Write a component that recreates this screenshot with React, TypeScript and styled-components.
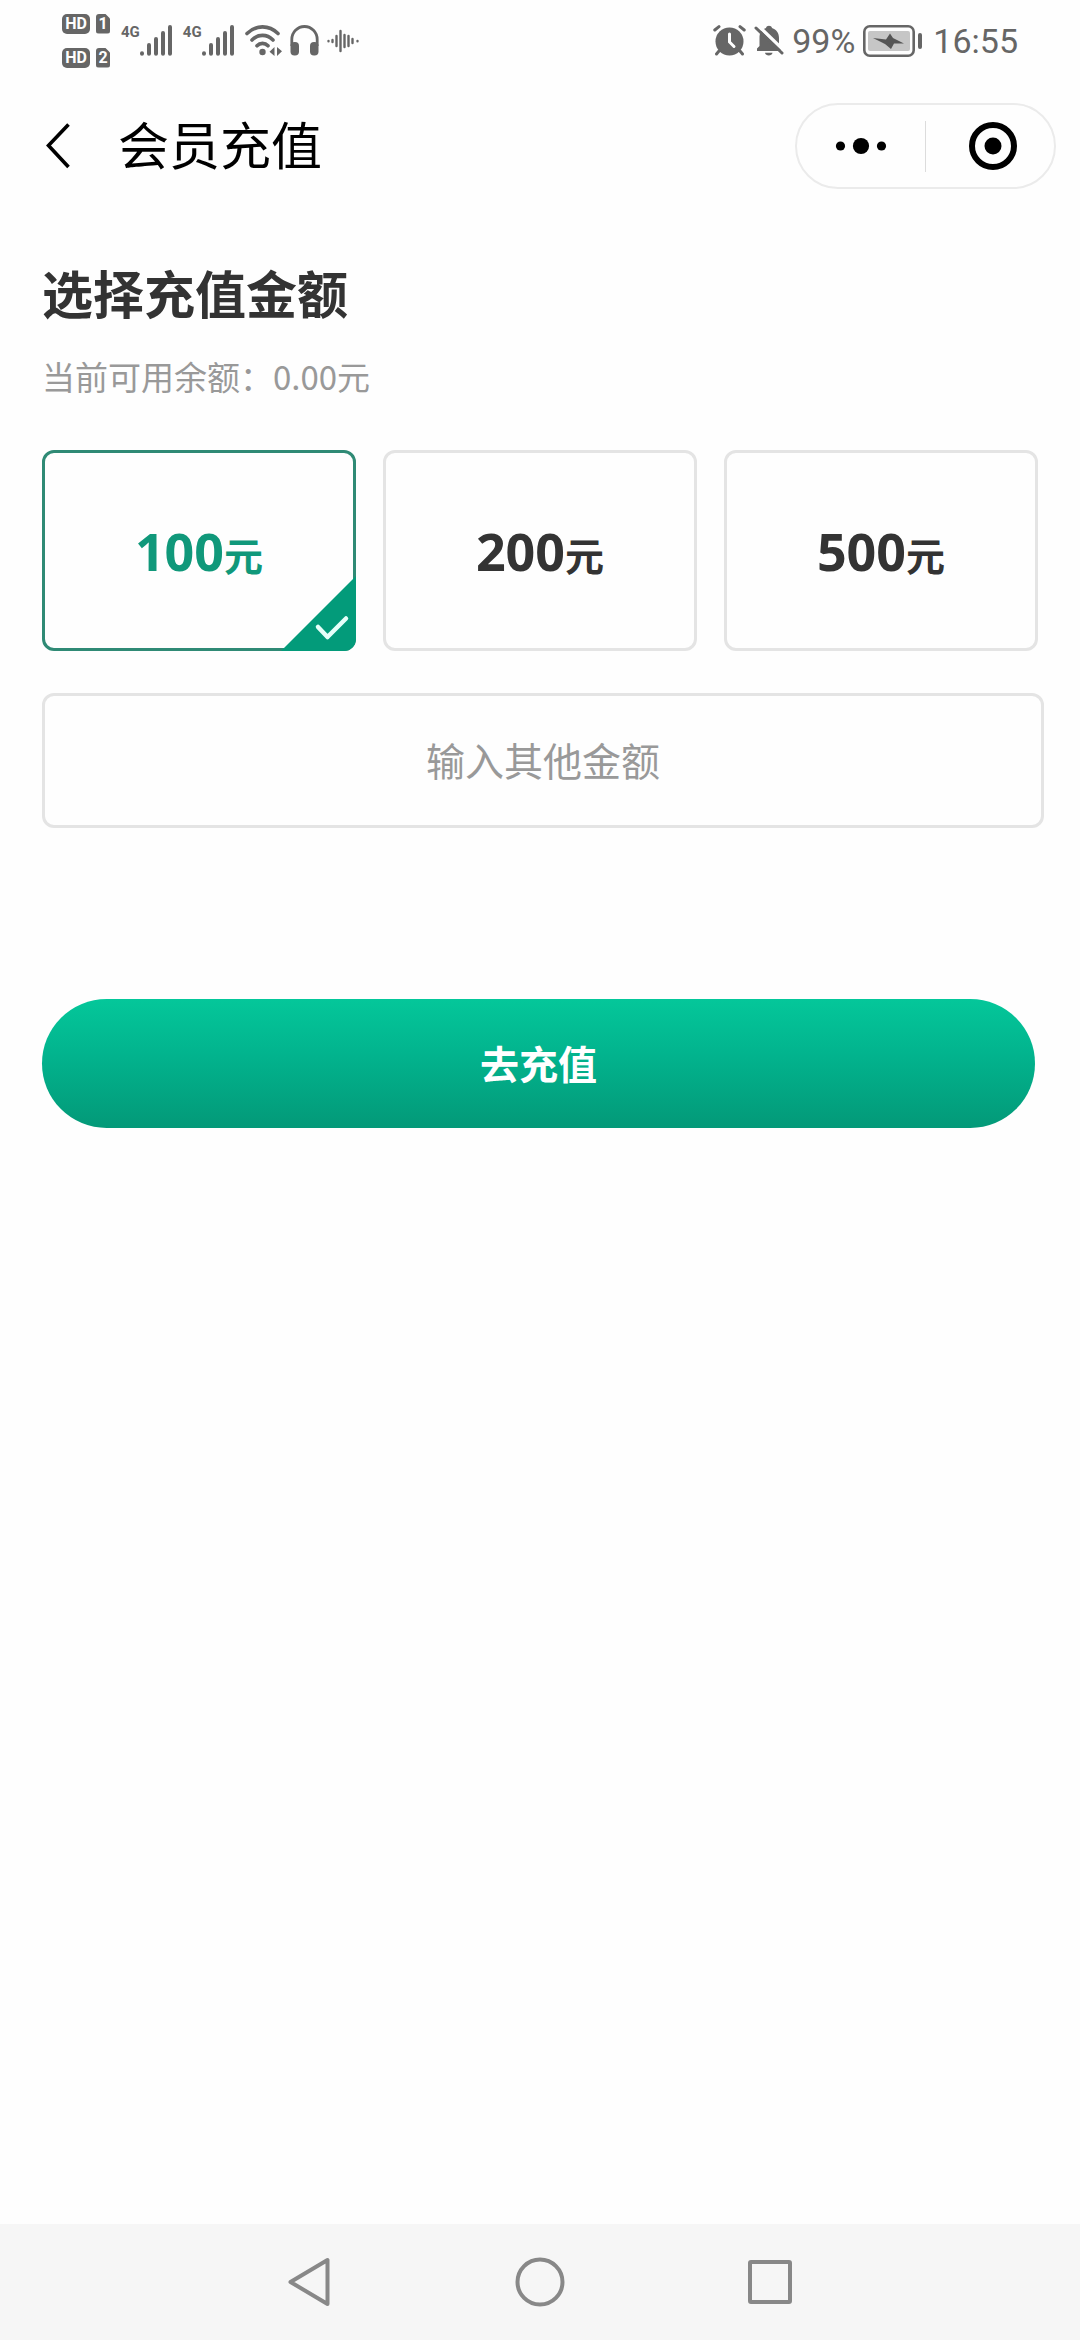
import React, { useState } from "react";
import styled, { createGlobalStyle } from "styled-components";

const GlobalStyle = createGlobalStyle`
  *, *::before, *::after { box-sizing: border-box; }
  body {
    margin: 0;
    background: #fefefe;
    color: #333;
    font-family: "Noto Sans CJK SC", "Noto Sans", sans-serif;
  }
  button, input { font-family: inherit; }
`;

const Screen = styled.div`
  min-height: 100vh;
  display: flex;
  flex-direction: column;
`;

/* ---------- status bar ---------- */

const StatusBar = styled.div`
  height: 81px;
  padding: 0 62px;
  display: flex;
  align-items: center;
  justify-content: space-between;
  color: #666;
  font-family: Roboto, sans-serif;
`;

const StatusGroup = styled.div<{ $gap: number }>`
  display: flex;
  align-items: center;
  gap: ${(p) => p.$gap}px;
`;

const SimStack = styled.div`
  display: grid;
  gap: 14px;
`;

const SimRow = styled.div`
  display: flex;
  gap: 6px;
`;

const Badge = styled.span<{ $sim?: boolean }>`
  width: ${(p) => (p.$sim ? 14 : 28)}px;
  height: 20px;
  border-radius: ${(p) => (p.$sim ? 3 : 5)}px;
  background: #666;
  color: #fefefe;
  font-size: 16px;
  font-weight: 700;
  line-height: 20px;
  text-align: center;
  clip-path: ${(p) => (p.$sim ? "polygon(0 0, 9px 0, 100% 5px, 100% 100%, 0 100%)" : "none")};
`;

const Signal = styled.div`
  display: flex;
  align-items: flex-start;
`;

const NetworkType = styled.span`
  font-size: 15px;
  font-weight: 700;
  line-height: 15px;
`;

const StatusText = styled.span`
  font-size: 34px;
  line-height: 40px;
`;

const SignalBars = () => (
  <svg width="32" height="31" viewBox="0 0 32 31" stroke="#666" strokeWidth="4" strokeLinecap="round">
    <path d="M2 28.2V28.8M9 20V28.8M16 14V28.8M23 8V28.8M30 2V28.8" />
  </svg>
);

const WifiIcon = () => (
  <svg width="37" height="31" viewBox="0 0 37 31" fill="none" stroke="#666" strokeWidth="3.6" strokeLinecap="round">
    <path d="M2 8.5C11-.3 24-.3 33 8.5M7 15C13 8.8 22 8.8 28 15M12 20.8C15 17.6 20 17.6 23 20.8" />
    <circle cx="17.5" cy="27" r="3.2" fill="#666" stroke="none" />
    <path d="M29.5 22V31L24.5 26.8ZM32 22V31L37 26.2Z" fill="#666" stroke="none" />
  </svg>
);

const HeadphoneIcon = () => (
  <svg width="29" height="31" viewBox="0 0 29 31">
    <path d="M1.8 21V14.5A12.7 13 0 0 1 27.2 14.5V21" fill="none" stroke="#666" strokeWidth="2.8" />
    <rect x="0.5" y="17" width="8.5" height="13.5" rx="4" fill="#666" />
    <rect x="20" y="17" width="8.5" height="13.5" rx="4" fill="#666" />
  </svg>
);

const VoiceIcon = () => (
  <svg width="33" height="24" viewBox="0 0 33 24" stroke="#666" strokeWidth="2.4" strokeLinecap="round">
    <path d="M1.5 12V12.2M5.5 11V13M9.5 7V17M13.5 2V22M17.5 6V18M21.5 7V17M25.5 10V14M30.5 12V12.2" />
  </svg>
);

const AlarmIcon = () => (
  <svg width="33" height="31" viewBox="0 0 33 31" fill="none" stroke="#666" strokeLinecap="round">
    <circle cx="16.5" cy="16.5" r="14" fill="#666" stroke="none" />
    <path d="M1.8 5L6 1.6M31.2 5L27 1.6M6 26L3.5 29M27 26L29.5 29" strokeWidth="3" />
    <path d="M16.5 9V17L21 21.5" stroke="#fefefe" strokeWidth="3" />
  </svg>
);

const MutedBellIcon = () => (
  <svg width="30" height="31" viewBox="0 0 30 31">
    <path
      d="M3 26V23.5L5.5 21V13C5.5 7 8 4.2 12 3C12.5 0 17.5 0 18 3C22.5 4.5 25 8 25 13V21L27 23.5V26Z"
      fill="#666"
    />
    <path d="M11 27.8H18.5C18 31.5 11.5 31.5 11 27.8Z" fill="#666" />
    <path d="M4 .5L31 26.5" stroke="#fefefe" strokeWidth="3.4" />
    <path d="M2 3L28 28" stroke="#666" strokeWidth="3" strokeLinecap="round" />
  </svg>
);

const BatteryIcon = () => (
  <svg width="62" height="32" viewBox="0 0 62 32">
    <rect x="1.3" y="1.3" width="49.4" height="29.4" rx="5.5" fill="none" stroke="#666" strokeWidth="2.6" />
    <rect x="5" y="6" width="42" height="20" rx="2" fill="#c6c6c6" />
    <path d="M10 13L23 14.5L27 8.5L30 13L41 18.5H31L28 24L22 19Z" fill="#555" />
    <rect x="55" y="8" width="4" height="16" rx="2" fill="#666" />
  </svg>
);

/* ---------- header ---------- */

const Header = styled.header`
  height: 130px;
  padding: 0 24px 0 45px;
  display: flex;
  align-items: center;
`;

const IconButton = styled.button`
  border: 0;
  padding: 0;
  background: none;
  display: flex;
  align-items: center;
  justify-content: center;
  cursor: pointer;
`;

const Title = styled.h1`
  flex: 1;
  margin: 0;
  padding: 0 0 6px 48px;
  color: #000;
  font-size: 51px;
  font-weight: 400;
  line-height: 60px;
`;

const Capsule = styled.div`
  width: 261px;
  height: 86px;
  padding-right: 1px;
  border: 2px solid #ebebeb;
  border-radius: 43px;
  display: grid;
  grid-template-columns: 128px 1px 1fr;
  align-items: center;
`;

const CloseButton = styled(IconButton)`
  padding-left: 6px;
`;

const CapsuleDivider = styled.span`
  height: 51px;
  background: #dcdcdc;
`;

/* ---------- content ---------- */

const Content = styled.main`
  flex: 1;
  padding: 51px 36px 60px 42px;
`;

const Heading = styled.h2`
  margin: 0;
  font-size: 51px;
  font-weight: 700;
  line-height: 60px;
`;

const Balance = styled.p`
  margin: 30px 0 50px;
  color: #999;
  font-size: 33px;
  line-height: 48px;
`;

const Amounts = styled.div`
  margin-right: 6px;
  display: grid;
  grid-template-columns: repeat(3, 1fr);
  gap: 27px;
`;

const AmountCard = styled.label<{ $selected: boolean }>`
  position: relative;
  height: 201px;
  padding-top: 6px;
  border: 3px solid ${(p) => (p.$selected ? "#2f8a75" : "#e4e4e4")};
  border-radius: 12px;
  color: ${(p) => (p.$selected ? "#10987a" : "#333")};
  display: flex;
  align-items: center;
  justify-content: center;
  font-family: "Noto Sans", "Noto Sans CJK SC", sans-serif;
  font-size: 52px;
  font-weight: 700;
  line-height: 60px;
  cursor: pointer;
`;

const HiddenRadio = styled.input`
  position: absolute;
  opacity: 0;
  margin: 0;
`;

const Unit = styled.span`
  font-size: 39px;
`;

const SelectedCorner = styled.svg`
  position: absolute;
  right: -3px;
  bottom: -3px;
`;

const CustomAmount = styled.input`
  display: block;
  width: 100%;
  height: 135px;
  margin-top: 42px;
  padding: 0 24px 4px;
  border: 3px solid #e4e4e4;
  border-radius: 12px;
  background: transparent;
  color: #333;
  font-size: 39px;
  text-align: center;
  outline: none;
  &::placeholder {
    color: #999;
    opacity: 1;
  }
`;

const SubmitRow = styled.div`
  margin: 171px 9px 0 0;
`;

const SubmitButton = styled.button`
  display: block;
  width: 100%;
  height: 129px;
  padding: 0 24px 4px;
  border: 0;
  border-radius: 65px;
  background: linear-gradient(180deg, #04c79a 0%, #02b48e 42%, #039978 100%);
  color: #fff;
  font-size: 39px;
  font-weight: 700;
  cursor: pointer;
`;

/* ---------- system navigation ---------- */

const SystemNav = styled.nav`
  height: 116px;
  padding: 0 18%;
  background: #f6f6f6;
  display: grid;
  grid-template-columns: repeat(3, 1fr);
`;

const amounts = [100, 200, 500];

export default function App() {
  const [selected, setSelected] = useState(100);
  const [custom, setCustom] = useState("");

  return (
    <Screen>
      <GlobalStyle />
      <StatusBar>
        <StatusGroup $gap={11}>
          <SimStack>
            {[1, 2].map((sim) => (
              <SimRow key={sim}>
                <Badge>HD</Badge>
                <Badge $sim>{sim}</Badge>
              </SimRow>
            ))}
          </SimStack>
          {[1, 2].map((sim) => (
            <Signal key={sim}>
              <NetworkType>4G</NetworkType>
              <SignalBars />
            </Signal>
          ))}
          <StatusGroup $gap={8}>
            <WifiIcon />
            <HeadphoneIcon />
            <VoiceIcon />
          </StatusGroup>
        </StatusGroup>
        <StatusGroup $gap={8}>
          <AlarmIcon />
          <MutedBellIcon />
          <StatusText>99%</StatusText>
          <BatteryIcon />
          <StatusText>16:55</StatusText>
        </StatusGroup>
      </StatusBar>

      <Header>
        <IconButton type="button" aria-label="返回">
          <svg width="25" height="48" viewBox="0 0 25 48" fill="none" stroke="#000" strokeWidth="3.6">
            <path d="M23.5 2.5L3.5 23.5L23.5 45" />
          </svg>
        </IconButton>
        <Title>会员充值</Title>
        <Capsule>
          <IconButton type="button" aria-label="更多">
            <svg width="52" height="18" viewBox="0 0 52 18">
              <circle cx="5.5" cy="9" r="4.6" />
              <circle cx="26" cy="9" r="8.1" />
              <circle cx="46.5" cy="9" r="4.6" />
            </svg>
          </IconButton>
          <CapsuleDivider />
          <CloseButton type="button" aria-label="关闭">
            <svg width="48" height="48" viewBox="0 0 48 48">
              <circle cx="24" cy="24" r="21" fill="none" stroke="#000" strokeWidth="6" />
              <circle cx="24" cy="24" r="8.5" />
            </svg>
          </CloseButton>
        </Capsule>
      </Header>

      <Content>
        <Heading>选择充值金额</Heading>
        <Balance>当前可用余额：0.00元</Balance>
        <Amounts role="radiogroup" aria-label="选择充值金额">
          {amounts.map((amount) => (
            <AmountCard key={amount} $selected={selected === amount}>
              <HiddenRadio
                type="radio"
                name="amount"
                value={amount}
                checked={selected === amount}
                onChange={() => setSelected(amount)}
              />
              <span>
                {amount}
                <Unit>元</Unit>
              </span>
              {selected === amount && (
                <SelectedCorner width="75" height="75" viewBox="0 0 75 75">
                  <path d="M75 0V63A12 12 0 0 1 63 75H0Z" fill="#039b7a" />
                  <path
                    d="M37 51L46.5 61L65 42.5"
                    fill="none"
                    stroke="#e6fff9"
                    strokeWidth="4.5"
                    strokeLinecap="round"
                    strokeLinejoin="round"
                  />
                </SelectedCorner>
              )}
            </AmountCard>
          ))}
        </Amounts>
        <CustomAmount
          type="text"
          inputMode="decimal"
          aria-label="输入其他金额"
          placeholder="输入其他金额"
          value={custom}
          onChange={(e) => setCustom(e.target.value)}
        />
        <SubmitRow>
          <SubmitButton type="button">去充值</SubmitButton>
        </SubmitRow>
      </Content>

      <SystemNav>
        <IconButton type="button" aria-label="后退">
          <svg width="48" height="50" viewBox="0 0 48 50" fill="none" stroke="#888" strokeWidth="4" strokeLinejoin="round">
            <path d="M41.5 3V47L4.5 25Z" />
          </svg>
        </IconButton>
        <IconButton type="button" aria-label="主屏幕">
          <svg width="50" height="50" viewBox="0 0 50 50" fill="none" stroke="#888" strokeWidth="4">
            <circle cx="25" cy="25" r="22.5" />
          </svg>
        </IconButton>
        <IconButton type="button" aria-label="最近任务">
          <svg width="46" height="46" viewBox="0 0 46 46" fill="none" stroke="#888" strokeWidth="4">
            <rect x="3" y="3" width="40" height="40" rx="1" />
          </svg>
        </IconButton>
      </SystemNav>
    </Screen>
  );
}
